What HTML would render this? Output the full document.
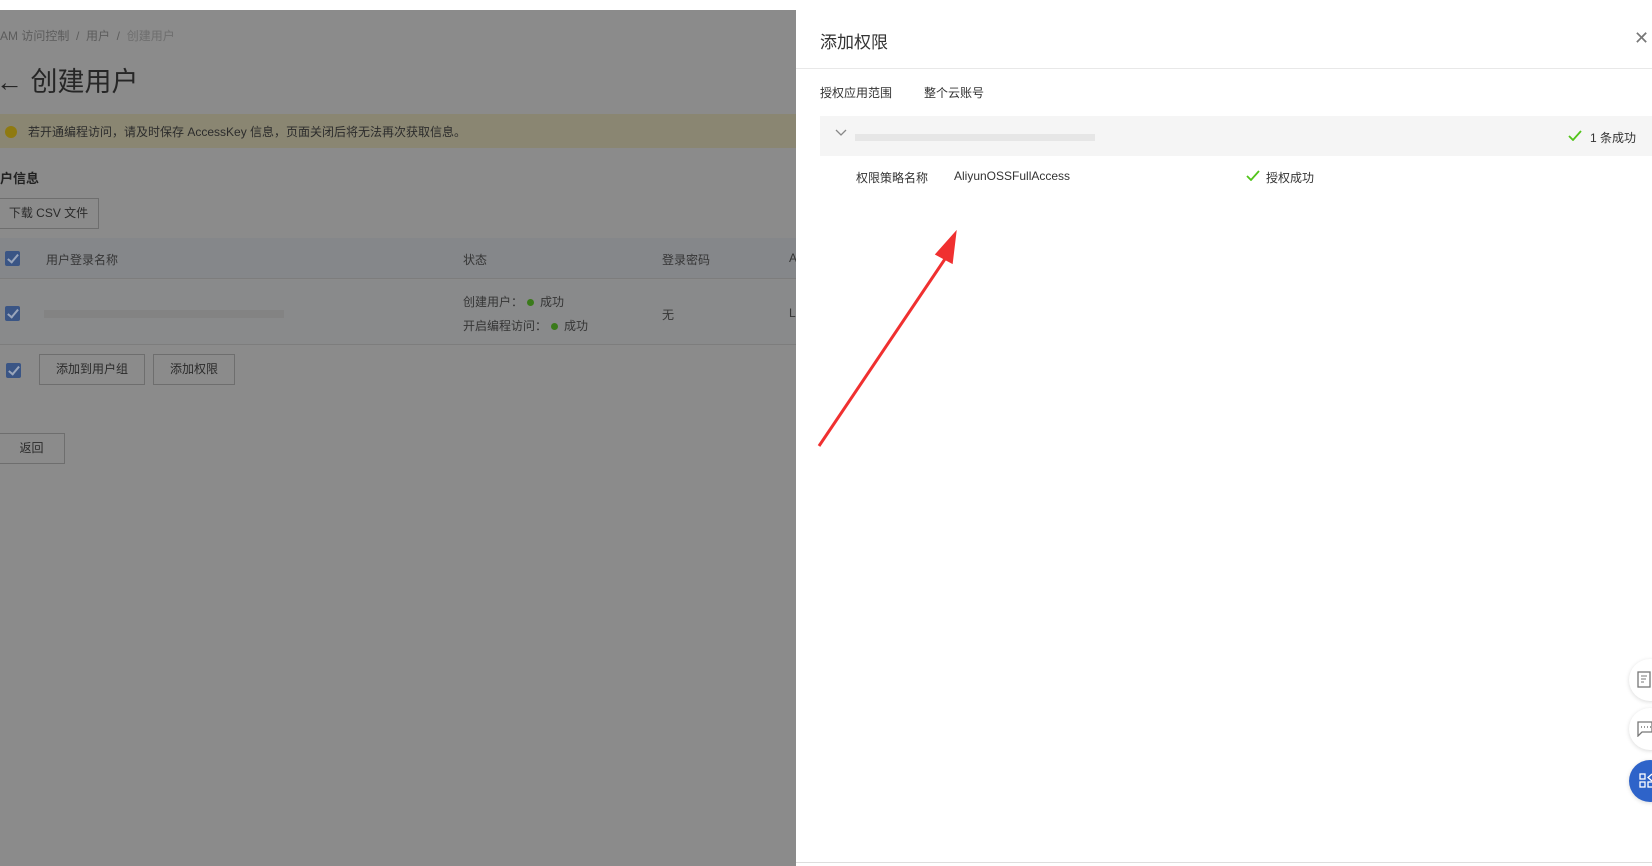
<!DOCTYPE html>
<html><head><meta charset="utf-8"><style>
*{margin:0;padding:0;box-sizing:border-box}
body{width:1652px;height:866px;overflow:hidden;background:#fff;font-family:"Liberation Sans","Noto Sans CJK SC",sans-serif;position:relative;font-size:12px}
.a{position:absolute;white-space:nowrap}
#left{position:absolute;left:0;top:10px;width:796px;height:856px;background:#8b8b8b;color:#2c2c2c;overflow:hidden}
.btn{position:absolute;border:1px solid #6e6e6e;background:#8b8b8b;color:#2a2a2a;font-size:12px;text-align:center}
.cb{position:absolute;width:15px;height:15px;background:#3a5585;border-radius:2px}
.cb:after{content:"";position:absolute;left:5px;top:1px;width:4px;height:9px;border:solid #9aa6bb;border-width:0 2px 2px 0;transform:rotate(40deg)}
.dot{display:inline-block;width:7px;height:7px;border-radius:50%;background:#3a7a1a;margin:0 6px 1px 4px;vertical-align:middle}
.fb{position:absolute;left:1629px;width:42px;height:42px;border-radius:50%;background:#fff;box-shadow:0 1px 4px rgba(0,0,0,.15)}
</style></head><body>
<div class="a" style="left:0;top:0;width:1652px;height:10px;background:#fff;box-shadow:0 1px 3px rgba(0,0,0,.15)"></div>
<div id="left">
 <div class="a" style="left:0;top:17px;font-size:12px;color:#5c5c5c">AM 访问控制 &nbsp;/&nbsp; 用户 &nbsp;/&nbsp; <span style="color:#6e6e6e">创建用户</span></div>
 <div class="a" style="left:-4px;top:50px;font-size:27px;color:#262626">← 创建用户</div>
 <div class="a" style="left:0;top:104px;width:796px;height:34px;background:#8a8672"></div>
 <div class="a" style="left:5px;top:116px;width:12px;height:12px;border-radius:50%;background:#8f7a10"></div>
 <div class="a" style="left:28px;top:113px;font-size:12px;color:#2c2c2c">若开通编程访问，请及时保存 AccessKey 信息，页面关闭后将无法再次获取信息。</div>
 <div class="a" style="left:0;top:158px;font-size:13px;font-weight:bold;color:#222">户信息</div>
 <div class="btn" style="left:-2px;top:188px;width:101px;height:31px;line-height:29px">下载 CSV 文件</div>
 <div class="a" style="left:0;top:228px;width:796px;height:41px;background:#85878a;border-bottom:1px solid #7d7d7d"></div>
 <div class="cb" style="left:5px;top:241px"></div>
 <div class="a" style="left:46px;top:241px;color:#353535">用户登录名称</div>
 <div class="a" style="left:463px;top:241px;color:#353535">状态</div>
 <div class="a" style="left:662px;top:241px;color:#353535">登录密码</div>
 <div class="a" style="left:789px;top:241px;color:#353535">A</div>
 <div class="a" style="left:0;top:270px;width:796px;height:65px;background:#898a8b;border-bottom:1px solid #7d7d7d"></div>
 <div class="cb" style="left:5px;top:296px"></div>
 <div class="a" style="left:44px;top:300px;width:240px;height:8px;background:#838383"></div>
 <div class="a" style="left:463px;top:283px;color:#353535">创建用户：<span class="dot"></span>成功</div>
 <div class="a" style="left:463px;top:307px;color:#353535">开启编程访问：<span class="dot"></span>成功</div>
 <div class="a" style="left:662px;top:296px;color:#353535">无</div>
 <div class="a" style="left:789px;top:296px;color:#353535">L</div>
 <div class="cb" style="left:6px;top:353px"></div>
 <div class="btn" style="left:39px;top:344px;width:106px;height:31px;line-height:29px">添加到用户组</div>
 <div class="btn" style="left:153px;top:344px;width:82px;height:31px;line-height:29px">添加权限</div>
 <div class="btn" style="left:-2px;top:423px;width:67px;height:31px;line-height:29px">返回</div>
</div>
<div class="a" style="left:796px;top:10px;width:856px;height:856px;background:#fff"></div>
<div class="a" style="left:820px;top:28px;font-size:17px;color:#333">添加权限</div>
<div class="a" style="left:1634px;top:28px;font-size:18px;color:#777">✕</div>
<div class="a" style="left:796px;top:68px;width:856px;height:1px;background:#e8e8e8"></div>
<div class="a" style="left:820px;top:84px;color:#333">授权应用范围</div>
<div class="a" style="left:924px;top:84px;color:#333">整个云账号</div>
<div class="a" style="left:820px;top:116px;width:832px;height:40px;background:#f5f5f5"></div>
<svg class="a" style="left:835px;top:129px" width="12" height="8"><path d="M1 1l5 5 5-5" stroke="#888" fill="none" stroke-width="1.3"/></svg>
<div class="a" style="left:855px;top:134px;width:240px;height:7px;background:#e6e6e6"></div>
<svg class="a" style="left:1568px;top:130px" width="14" height="11"><path d="M1 6l4 4 8-9" stroke="#52c41a" fill="none" stroke-width="1.8"/></svg>
<div class="a" style="left:1590px;top:129px;color:#333">1 条成功</div>
<div class="a" style="left:856px;top:169px;color:#333">权限策略名称</div>
<div class="a" style="left:954px;top:169px;color:#333">AliyunOSSFullAccess</div>
<svg class="a" style="left:1246px;top:170px" width="14" height="11"><path d="M1 6l4 4 8-9" stroke="#52c41a" fill="none" stroke-width="1.8"/></svg>
<div class="a" style="left:1266px;top:169px;color:#333">授权成功</div>
<svg class="a" style="left:800px;top:228px" width="170" height="232"><path d="M19 218L147 28" stroke="#f03030" stroke-width="3"/><path d="M154 8L138 26 151 33Z" fill="#f03030" stroke="#f03030" stroke-width="4"/></svg>
<div class="fb" style="top:659px"></div>
<svg class="a" style="left:1637px;top:671px" width="15" height="18"><rect x="1" y="1" width="12" height="15" fill="none" stroke="#777" stroke-width="1.3"/><path d="M4 5h6M4 8h5M4 11h3" stroke="#777"/></svg>
<div class="fb" style="top:708px"></div>
<svg class="a" style="left:1637px;top:721px" width="15" height="16"><path d="M1 1h14v10H5l-4 4z" fill="none" stroke="#777" stroke-width="1.3"/><path d="M4 6h1M7 6h1M10 6h1M13 6h1" stroke="#777" stroke-width="1.5"/></svg>
<div class="fb" style="top:760px;background:#2e63c9"></div>
<svg class="a" style="left:1639px;top:773px" width="13" height="16"><rect x="1" y="1" width="5" height="5" fill="none" stroke="#fff" stroke-width="1.3"/><rect x="1" y="9" width="5" height="5" fill="none" stroke="#fff" stroke-width="1.3"/><rect x="9" y="9" width="5" height="5" fill="none" stroke="#fff" stroke-width="1.3"/><path d="M13 1l-4 3.5 4 3.5" fill="none" stroke="#fff" stroke-width="1.3"/></svg>
<div class="a" style="left:796px;top:862px;width:856px;height:1px;background:#ddd"></div>
</body></html>
